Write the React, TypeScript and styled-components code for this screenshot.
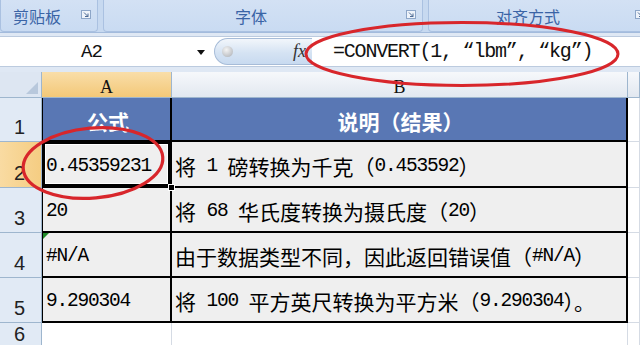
import React from 'react';
import styled, { createGlobalStyle } from 'styled-components';

const GlobalStyle = createGlobalStyle`
  html, body {
    margin: 0;
    padding: 0;
    background: #dfe8f4;
    overflow: hidden;
  }
`;

const Page = styled.div`
  position: relative;
  width: 640px;
  height: 345px;
  overflow: hidden;
  background: #dfe8f4;
  font-family: "Liberation Sans", "Noto Sans CJK SC", sans-serif;
`;

/* ---------- ribbon ---------- */

const Ribbon = styled.div`
  height: 32px;
  display: flex;
  gap: 5px;
  background: #c7d9f0;
  border-bottom: 1px solid #a3bbdc;
`;

const RibbonGroup = styled.div<{ $w: number }>`
  position: relative;
  flex: none;
  width: ${p => p.$w}px;
  display: flex;
  align-items: center;
  justify-content: center;
  padding-right: 24px;
  box-sizing: border-box;
  background: linear-gradient(#d3e1f4, #c9dbf2);
  border: 1px solid #aac1e1;
  border-top: none;
  border-radius: 0 0 4px 4px;
  font: 16px "Noto Sans CJK SC", sans-serif;
  color: #3a64a6;
`;

const Launcher = styled.svg`
  position: absolute;
  right: 6px;
  top: 10px;
`;

const LauncherIcon = () => (
  <Launcher width="10" height="9" viewBox="0 0 10 9">
    <rect x="0.5" y="0.5" width="9" height="8" fill="#eef3fa" stroke="#8da6c8" />
    <path d="M3 2.5 L7 6.5 M7 3.5 V6.5 H4" stroke="#4d6a94" strokeWidth="1" fill="none" />
  </Launcher>
);

/* ---------- formula bar ---------- */

const FormulaBar = styled.div`
  margin: 3px 0 5px;
  height: 31px;
  display: flex;
  background: #fff;
  border-top: 1px solid #bccbdf;
  border-bottom: 1px solid #bccbdf;
  box-sizing: border-box;
`;

const NameBox = styled.div`
  position: relative;
  width: 214px;
  flex: none;
  display: flex;
  align-items: center;
  padding-left: 81px;
  box-sizing: border-box;
  font: 19px "Liberation Mono", monospace;
  letter-spacing: -1px;
  color: #111;
`;

const DropArrow = styled.span`
  position: absolute;
  left: 197px;
  top: 13px;
  width: 0;
  height: 0;
  border-left: 4px solid transparent;
  border-right: 4px solid transparent;
  border-top: 5px solid #111;
`;

const FxPill = styled.div`
  flex: none;
  width: 98px;
  margin: 1px 0;
  display: flex;
  align-items: center;
  justify-content: space-between;
  padding: 0 6px 0 7px;
  box-sizing: border-box;
  background: linear-gradient(#f2f6fb, #d5e3f3 55%, #c8daf0);
  border: 1px solid #a7bcd8;
  border-right: none;
  border-radius: 15px 0 0 15px;
`;

const Knob = styled.span`
  width: 11px;
  height: 11px;
  border-radius: 50%;
  background: radial-gradient(circle at 40% 35%, #f4f4f4, #a9adb3);
`;

const Fx = styled.span`
  font: italic 18px "Liberation Serif", serif;
  color: #333;
`;

const FormulaInput = styled.div`
  flex: 1;
  display: flex;
  align-items: center;
  padding-left: 21px;
  font: 20px "Liberation Mono", monospace;
  letter-spacing: -1.2px;
  color: #111;
  white-space: pre;
`;

/* ---------- sheet ---------- */

const Sheet = styled.div`
  display: grid;
  grid-template-columns: 42px 130px 456px 1fr;
  grid-template-rows: 26px 44px 46px 45px 45px 45px 1fr;
  height: 273px;
`;

const Corner = styled.div`
  position: relative;
  background: #dde6f2;
  border-right: 1px solid #9eb6ce;
  border-bottom: 1px solid #9eb6ce;
  &::after {
    content: '';
    position: absolute;
    right: 3px;
    bottom: 3px;
    border-left: 12px solid transparent;
    border-bottom: 12px solid #b8c8dc;
  }
`;

const ColHead = styled.div<{ $active?: boolean }>`
  display: flex;
  justify-content: center;
  align-items: center;
  padding-top: 5px;
  box-sizing: border-box;
  background: ${p =>
    p.$active ? 'linear-gradient(#f9dea9, #f3c878)' : 'linear-gradient(#f6f8fb, #e2e8f0)'};
  border-right: 1px solid #9eb6ce;
  border-bottom: 1px solid #9eb6ce;
  font: 18px "Liberation Serif", serif;
  color: #111;
`;

const RowHead = styled.div<{ $active?: boolean }>`
  display: flex;
  align-items: flex-end;
  padding: 0 0 2px 14px;
  box-sizing: border-box;
  background: ${p => (p.$active ? 'linear-gradient(90deg, #f9dba2, #f5cd82)' : '#e1eaf5')};
  border-right: 1px solid #9eb6ce;
  border-bottom: 1px solid #9eb6ce;
  font: 20px "Liberation Sans", sans-serif;
  color: #222;
`;

const Cell = styled.div<{ $head?: boolean; $first?: boolean; $selected?: boolean }>`
  position: relative;
  display: flex;
  align-items: center;
  justify-content: ${p => (p.$head ? 'center' : 'flex-start')};
  padding: 3px 0 0 3px;
  box-sizing: border-box;
  background: ${p => (p.$head ? '#5977b4' : '#efefef')};
  border-right: 2px solid #000;
  border-bottom: 2px solid #000;
  border-left: ${p => (p.$first ? '1px solid #000' : 'none')};
  box-shadow: ${p => (p.$selected ? 'inset 0 0 0 2px #000, inset 0 0 0 3px #fff' : 'none')};
  font: 19.5px "Liberation Mono", "Noto Sans CJK SC", monospace;
  letter-spacing: -1.2px;
  color: ${p => (p.$head ? '#fff' : '#000')};
  white-space: pre;
`;

const Blank = styled.div`
  background: #fff;
  border-right: 1px solid #d5dbe4;
  border-bottom: 1px solid #d5dbe4;
`;

const Han = styled.span<{ $bold?: boolean }>`
  font-family: "Noto Sans CJK SC", sans-serif;
  font-size: 21px;
  letter-spacing: 0;
  font-weight: ${p => (p.$bold ? 700 : 400)};
`;

const FillHandle = styled.span`
  position: absolute;
  right: -5px;
  bottom: -5px;
  width: 5px;
  height: 5px;
  background: #000;
  border: 1px solid #fff;
  z-index: 2;
`;

const ErrorFlag = styled.span`
  position: absolute;
  left: 0;
  top: 0;
  border-top: 6px solid #1f8a2a;
  border-right: 6px solid transparent;
`;

const Marks = styled.svg`
  position: absolute;
  left: 0;
  top: 0;
  pointer-events: none;
`;

const CJK_RUN = /([\u3000-\u303f\u4e00-\u9fff\uff00-\uffef]+)/;

const Mixed = ({ text, bold }: { text: string; bold?: boolean }) => (
  <>
    {text.split(CJK_RUN).map((part, i) =>
      CJK_RUN.test(part) ? (
        <Han key={i} $bold={bold}>
          {part}
        </Han>
      ) : (
        <span key={i}>{part}</span>
      )
    )}
  </>
);

const rows = [
  { a: '0.45359231', b: '将 1 磅转换为千克（0.453592）' },
  { a: '20', b: '将 68 华氏度转换为摄氏度（20）' },
  { a: '#N/A', b: '由于数据类型不同，因此返回错误值（#N/A）', flag: true },
  { a: '9.290304', b: '将 100 平方英尺转换为平方米（9.290304）。' },
];

export default function App() {
  return (
    <Page>
      <GlobalStyle />
      <Ribbon>
        <RibbonGroup $w={98}>
          剪贴板
          <LauncherIcon />
        </RibbonGroup>
        <RibbonGroup $w={320}>
          字体
          <LauncherIcon />
        </RibbonGroup>
        <RibbonGroup $w={224}>
          对齐方式
          <LauncherIcon />
        </RibbonGroup>
      </Ribbon>

      <FormulaBar>
        <NameBox>
          A2
          <DropArrow />
        </NameBox>
        <FxPill>
          <Knob />
          <Fx>fx</Fx>
        </FxPill>
        <FormulaInput>=CONVERT(1, “lbm”, “kg”)</FormulaInput>
      </FormulaBar>

      <Sheet>
        <Corner />
        <ColHead $active>A</ColHead>
        <ColHead>B</ColHead>
        <ColHead />

        <RowHead>1</RowHead>
        <Cell $head $first>
          <Mixed text="公式" bold />
        </Cell>
        <Cell $head>
          <Mixed text="说明（结果）" bold />
        </Cell>
        <Blank />

        {rows.map((r, i) => (
          <React.Fragment key={i}>
            <RowHead $active={i === 0}>{i + 2}</RowHead>
            <Cell $first $selected={i === 0}>
              {r.flag && <ErrorFlag />}
              {r.a}
              {i === 0 && <FillHandle />}
            </Cell>
            <Cell>
              <Mixed text={r.b} />
            </Cell>
            <Blank />
          </React.Fragment>
        ))}

        <RowHead>6</RowHead>
        <Blank />
        <Blank />
        <Blank />
      </Sheet>

      <Marks width="640" height="345" viewBox="0 0 640 345">
        <ellipse cx="462" cy="54" rx="156" ry="31.5" fill="none" stroke="#d8262b" strokeWidth="3" />
        <ellipse
          cx="93"
          cy="163"
          rx="70"
          ry="35"
          fill="none"
          stroke="#d8262b"
          strokeWidth="3.2"
          transform="rotate(-5 93 163)"
        />
      </Marks>
    </Page>
  );
}
